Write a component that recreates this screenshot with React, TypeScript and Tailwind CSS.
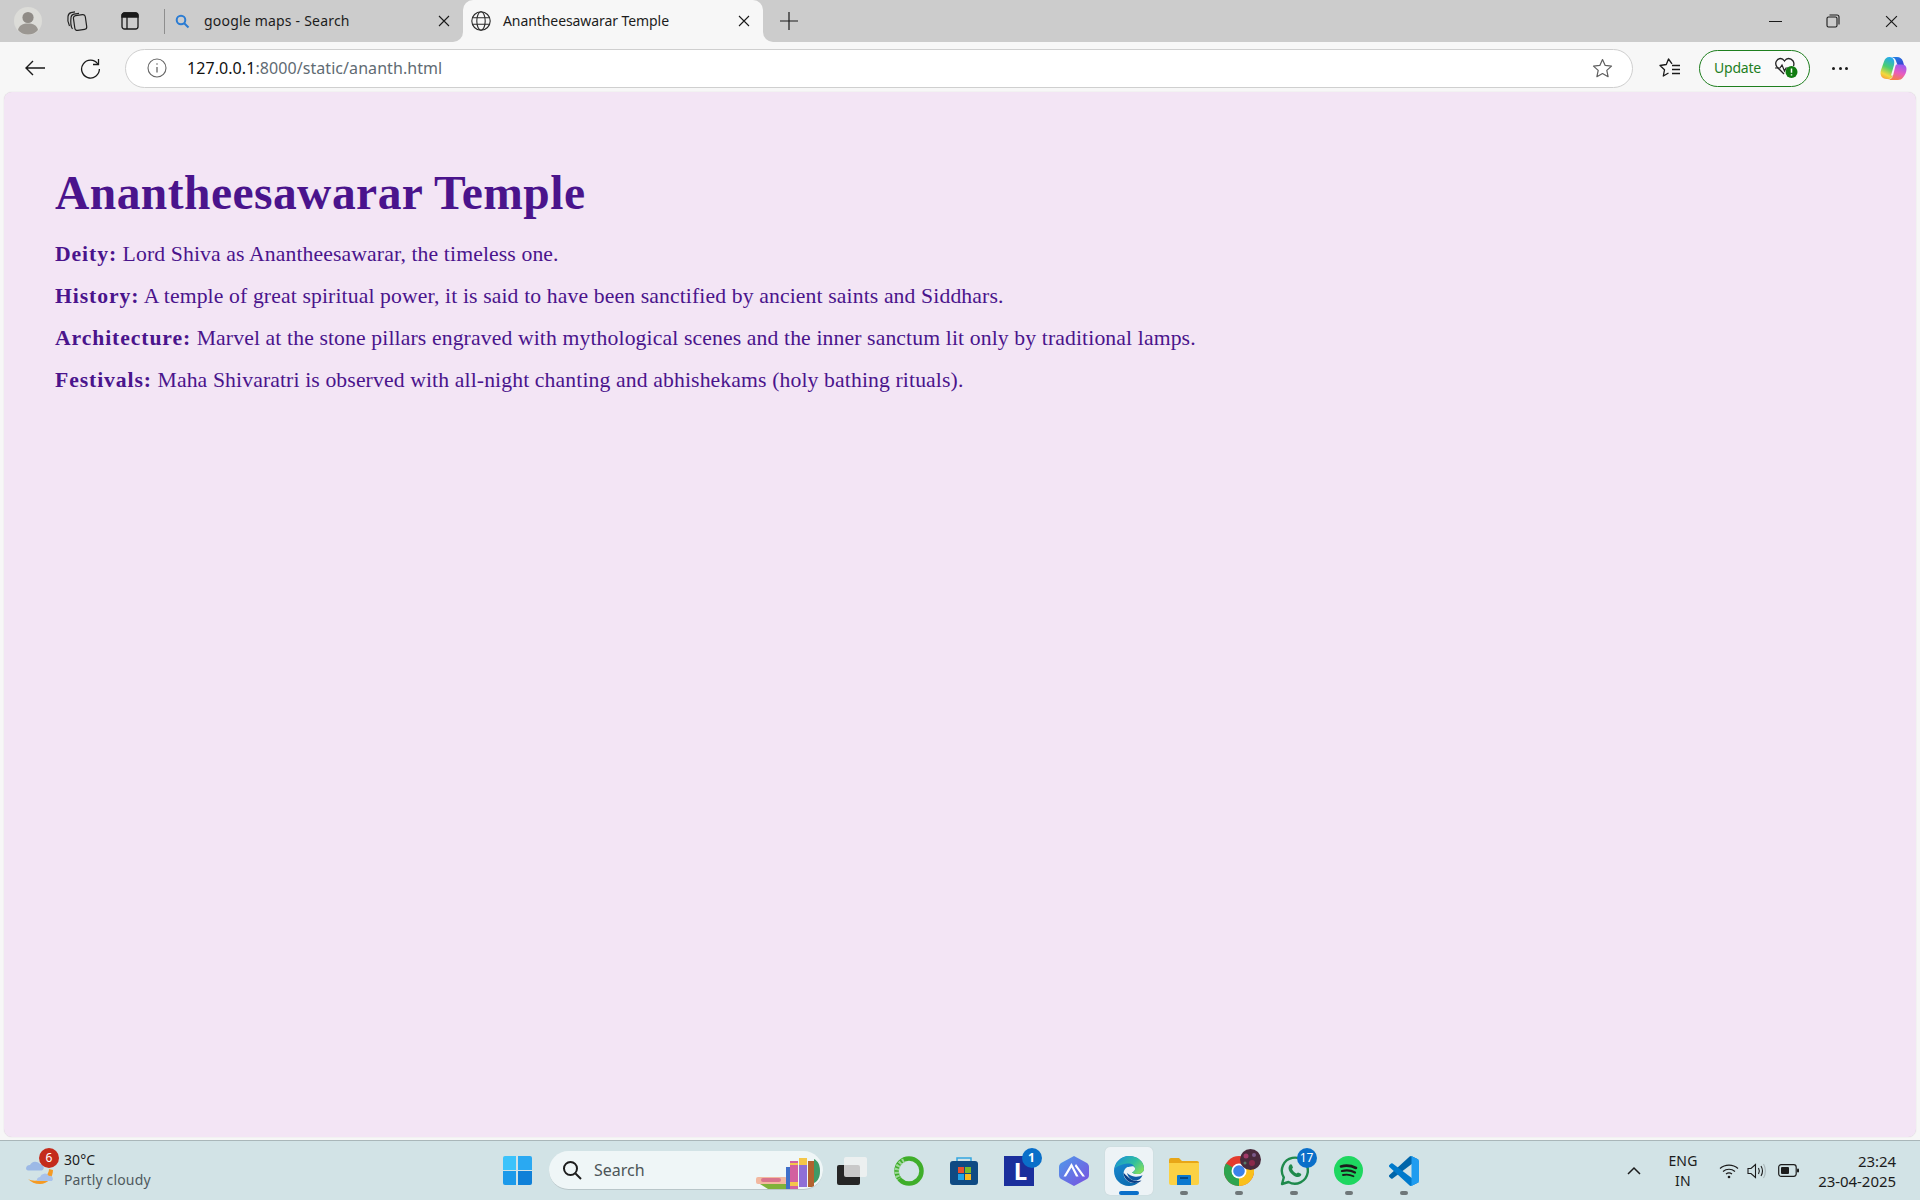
import React from "react";

const ui = { fontFamily: '"Noto Sans", "Open Sans", sans-serif' };
const serif = { fontFamily: '"Liberation Serif", serif' };

function X({ size = 12 }: { size?: number }) {
  return (
    <svg width={size} height={size} viewBox="0 0 12 12" fill="none" stroke="#1a1a1a" strokeWidth="1.1">
      <path d="M1 1l10 10M11 1L1 11" />
    </svg>
  );
}

function Profile() {
  return (
    <svg width="28" height="28" viewBox="0 0 28 28">
      <circle cx="14" cy="14" r="14" fill="#dcdcd8" />
      <circle cx="14" cy="10.5" r="5.6" fill="#8f8b86" />
      <path d="M4 23c1-5 5-6.500 10-6.500S23 18 24 23c-2.500 3-6 4.500-10 4.500S6.500 26 4 23z" fill="#9b9792" />
    </svg>
  );
}

function Collections() {
  return (
    <svg width="22" height="22" viewBox="0 0 22 22" fill="none" stroke="#222" strokeWidth="1.2">
      <rect x="8" y="5" width="12" height="15" rx="2.500" transform="rotate(-8 14 12)" />
      <path d="M6.500 19C5 17 4.500 12 5 7.500c.2-2 1.500-3 3-3.300l5-.9" />
      <path d="M3.500 16C2 13 1.500 9 2 6.500 2.300 4 3.500 3 5 2.600L9 1.800" />
    </svg>
  );
}

function TabsIcon() {
  return (
    <svg width="18" height="18" viewBox="0 0 18 18" fill="none" stroke="#1a1a1a" strokeWidth="1.3">
      <rect x="1" y="1" width="16" height="16" rx="2.500" />
      <path d="M1 3.500a2.500 2.500 0 012.500-2.500h11A2.500 2.500 0 0117 3.500V5H1z" fill="#1a1a1a" />
      <path d="M6 5v12" />
    </svg>
  );
}

function Globe() {
  return (
    <svg width="20" height="20" viewBox="0 0 20 20" fill="none" stroke="#2a2a2a" strokeWidth="1.1">
      <circle cx="10" cy="10" r="9.200" />
      <ellipse cx="10" cy="10" rx="4.200" ry="9.200" />
      <path d="M1.500 6.800h17M1.500 13.200h17" />
    </svg>
  );
}

function Star({ stroke = "#5f5f5f" }: { stroke?: string }) {
  return (
    <svg width="21" height="21" viewBox="0 0 21 21" fill="none" stroke={stroke} strokeWidth="1.2" strokeLinejoin="round">
      <path d="M10.500 1.500l2.700 5.900 6.300.7-4.700 4.300 1.300 6.300-5.600-3.200-5.600 3.200 1.300-6.300L1.500 8.100l6.300-.7z" />
    </svg>
  );
}

function Weather() {
  return (
    <svg width="32" height="32" viewBox="0 0 32 32">
      <path d="M3 24c5 3 14 2 18-3 2-2 3-5 3-7l4 1c0 7-5 14-13 14-5 0-9-2-12-5z" fill="#f59a23" />
      <path d="M1 14a4 4 0 014-4 6 6 0 0110-1 3.500 3.500 0 012 6.500H3a3 3 0 01-2-1.500z" fill="#9cb9e6" />
      <path d="M12 26a3.500 3.500 0 013-4 5 5 0 019-1 3 3 0 013 5H13z" fill="#a9c2ea" />
    </svg>
  );
}

function Badge({ n, bg = "#0a6fc9" }: { n: string; bg?: string }) {
  return (
    <span
      className="absolute top-[-8px] right-[-8px] flex h-[20px] min-w-[20px] items-center justify-center rounded-full px-[2px] text-[12px] text-white"
      style={{ backgroundColor: bg }}
    >
      {n}
    </span>
  );
}

function TaskIcon({ children, dot, w = 55 }: { children: React.ReactNode; dot?: boolean; w?: number }) {
  return (
    <div className="relative flex h-[48px] shrink-0 items-center justify-center" style={{ width: w }}>
      {children}
      {dot && <span className="absolute bottom-[0px] h-[4px] w-[8px] rounded-full bg-[#6f7779]" />}
    </div>
  );
}

function Books() {
  return (
    <svg width="64" height="38" viewBox="0 0 64 38">
      <rect x="0" y="26" width="31" height="7" rx="2" fill="#f2b8a0" />
      <rect x="5" y="27" width="20" height="4" rx="2" fill="#d9748c" />
      <path d="M4 33h27v5H12z" fill="#7fb23a" />
      <rect x="30" y="16" width="4" height="22" fill="#3f6fc9" />
      <rect x="34" y="10" width="8" height="28" fill="#d3609f" />
      <rect x="34" y="12" width="8" height="2" fill="#f4c64a" />
      <rect x="34" y="31" width="8" height="4" fill="#f4c64a" />
      <rect x="43" y="7" width="8" height="29" fill="#8f6fd6" />
      <rect x="43" y="7" width="8" height="7" fill="#f4c64a" />
      <rect x="52" y="10" width="6" height="26" fill="#b2622f" />
      <path d="M58 8c4 2 6 6 6 12s-2 10-6 12z" fill="#3f9a66" />
    </svg>
  );
}

function Copilot() {
  return (
    <svg width="28" height="28" viewBox="0 0 28 28">
      <defs>
        <linearGradient id="cpA" x1="0" y1="0" x2="1" y2="1"><stop offset="0" stopColor="#1b8fe8" /><stop offset="1" stopColor="#3a3fd0" /></linearGradient>
        <linearGradient id="cpB" x1="0.6" y1="0" x2="0.3" y2="1"><stop offset="0" stopColor="#22a8ee" /><stop offset=".45" stopColor="#4ccf6e" /><stop offset=".8" stopColor="#f5d83c" /><stop offset="1" stopColor="#f6a33c" /></linearGradient>
        <linearGradient id="cpC" x1="0.7" y1="0" x2="0.3" y2="1"><stop offset="0" stopColor="#9a5cf0" /><stop offset=".5" stopColor="#e85cc0" /><stop offset="1" stopColor="#f6843c" /></linearGradient>
      </defs>
      <path d="M10 3h8c3 0 5 1.500 6 4.500L25 11h-6.500L17 7c-.6-2-1.800-4-7-4z" fill="url(#cpA)" />
      <path d="M10.500 3C7.500 3 6 4.700 5 7.500L2 16c-1.600 5 1 9 5.500 9h2.300c2.200 0 3.400-1.500 4-3.500L12 21.500l3-10.500C16 7 14.500 3 10.500 3z" fill="url(#cpB)" />
      <path d="M17.500 10.500H23c3 0 4.500 2 4.500 4.500 0 3-1.300 6-3.500 8.500-1.500 1.800-3 2.500-5 2.500H8c3.500 0 5.200-1.700 6-4.500l.2-.5L16 13.500c.4-1.500.8-3 1.500-3z" fill="url(#cpC)" />
    </svg>
  );
}

function Edge() {
  return (
    <svg className="relative" width="30" height="30" viewBox="0 0 30 30">
      <defs>
        <linearGradient id="edgeA" x1="0" y1="0.2" x2="1" y2="0.8"><stop offset="0" stopColor="#1a93d4" /><stop offset=".55" stopColor="#2fbf9f" /><stop offset="1" stopColor="#86e05a" /></linearGradient>
        <linearGradient id="edgeB" x1="0" y1="0" x2="0.5" y2="1"><stop offset="0" stopColor="#1c8fd6" /><stop offset="1" stopColor="#0c6cb0" /></linearGradient>
      </defs>
      <path d="M15 0C6.700 0 0 6.700 0 15s6.700 15 15 15c4 0 7.500-1.500 10-4-6 2.500-12 .5-14.500-4.500C8.500 17 10 12.500 14 10.800 12.500 12 20 8 21 12c.5 2 -1 3.500-3 4.500 5 3 12 1.500 12-4C30 5.500 23.500 0 15 0z" fill="url(#edgeB)" />
      <path d="M15 0c8.500 0 15 5.500 15 12.500 0 5.500-7 7-12 4 2-1 3.500-2.500 3-4.500-1-4-5-5-8-4.500C7.500 8.500 3 10 .8 12.500 2 5.500 8 0 15 0z" fill="url(#edgeA)" />
      <path d="M9.500 17c.5 6 5.500 10 11 10 3 0 5-.7 7-2.500-4 1-9.500.5-13-3-2.200-2-3.500-3.500-5-4.500z" fill="#0b3f86" />
      <path d="M13 17c2 2 4.500 3 7 3.500 3.500.5 6.500 0 8.500-1.500-1 3-3.500 5.500-7 5.500-4 0-7.500-3-8.500-7.500z" fill="#0d5aa6" />
    </svg>
  );
}

function VSCode() {
  return (
    <svg width="30" height="30" viewBox="0 0 100 100">
      <path fill="#0065A9" d="M96.460 10.800 75.860.870c-2.380-1.150-5.230-.660-7.100 1.200L1.320 63.580a4.170 4.170 0 00.005 6.160l5.510 5.010a4.170 4.170 0 005.320.240L93.400 13.470c2.720-2.060 6.620-.120 6.620 3.300v-.240c0-2.400-1.380-4.580-3.540-5.630z" />
      <path fill="#007ACC" d="M96.460 89.200 75.860 99.130c-2.380 1.150-5.230.660-7.100-1.200L1.320 36.420a4.170 4.170 0 01.005-6.160l5.510-5.010a4.170 4.170 0 015.320-.240L93.400 86.530c2.720 2.060 6.620.120 6.620-3.300v.240c0 2.400-1.380 4.580-3.540 5.630z" />
      <path fill="#1F9CF0" d="M75.860 99.130c-2.380 1.150-5.230.660-7.100-1.200 2.310 2.310 6.250.670 6.250-2.580V4.650c0-3.250-3.940-4.890-6.250-2.580 1.870-1.870 4.720-2.360 7.100-1.200l20.600 9.900c2.160 1.040 3.540 3.230 3.540 5.630v66.700c0 2.400-1.380 4.590-3.540 5.630z" />
    </svg>
  );
}

export default function App() {
  const para = "m-0 mb-[18.700px] h-[23.300px] text-[21.700px] leading-[23.300px] tracking-[0.120px]";
  const label = "tracking-[0.900px]";
  return (
    <div className="flex h-[1200px] w-[1920px] flex-col overflow-hidden bg-[#f7f7f7]" style={ui}>
      {/* tab strip */}
      <header className="flex h-[42px] shrink-0 items-center bg-[#cccccc] text-[14px] text-[#1c1c1c]">
        <div className="flex w-[54px] items-center justify-center pl-[1px]"><Profile /></div>
        <div className="flex w-[45px] items-center justify-center"><Collections /></div>
        <div className="flex w-[65px] items-center justify-center pr-[3px]"><TabsIcon /></div>
        <div className="h-[25px] w-px bg-[#8e8e8e]" />
        <div className="flex w-[298px] items-center pl-[10px]">
          <svg width="15" height="15" viewBox="0 0 15 15" fill="none" stroke="#2b7cd3" strokeWidth="2">
            <circle cx="6" cy="6" r="4.300" />
            <path d="M9.200 9.200l4.300 4.300" />
          </svg>
          <span className="ml-[14px] w-[234px] pb-[1px] text-[14px] tracking-[0.200px]">google maps - Search</span>
          <X />
        </div>
        <div className="relative flex h-[42px] w-[300px] items-center rounded-t-[10px] bg-[#f7f7f7] pl-[8px]">
          <span className="absolute bottom-0 left-[-10px] h-[10px] w-[10px] bg-[#f7f7f7]"><span className="block h-full w-full rounded-br-[10px] bg-[#cccccc]" /></span>
          <span className="absolute bottom-0 right-[-10px] h-[10px] w-[10px] bg-[#f7f7f7]"><span className="block h-full w-full rounded-bl-[10px] bg-[#cccccc]" /></span>
          <Globe />
          <span className="ml-[12px] w-[235px] pb-[1px] text-[14px] tracking-[-0.080px]">Anantheesawarar Temple</span>
          <X />
        </div>
        <div className="flex w-[52px] items-center justify-center">
          <svg width="18" height="18" viewBox="0 0 18 18" stroke="#1a1a1a" strokeWidth="1.2"><path d="M9 0v18M0 9h18" /></svg>
        </div>
        <div className="flex-1" />
        <div className="flex items-center">
          <div className="flex w-[58px] justify-center"><span className="h-px w-[13px] bg-[#1a1a1a]" /></div>
          <div className="flex w-[58px] justify-center">
            <svg width="14" height="14" viewBox="0 0 14 14" fill="none" stroke="#1a1a1a" strokeWidth="1.1">
              <rect x="1" y="3" width="10" height="10" rx="1.500" />
              <path d="M3.500 1H11a2 2 0 012 2v7.500" />
            </svg>
          </div>
          <div className="flex w-[58px] justify-center"><X size={13} /></div>
        </div>
      </header>

      {/* toolbar */}
      <nav className="flex h-[50px] shrink-0 items-center bg-[#f7f7f7] pt-[2px]">
        <div className="flex w-[70px] justify-center">
          <svg width="20" height="16" viewBox="0 0 20 16" fill="none" stroke="#1a1a1a" strokeWidth="1.4">
            <path d="M20 8H1M8 1L1 8l7 7" />
          </svg>
        </div>
        <div className="flex w-[40px] justify-center">
          <svg width="21" height="21" viewBox="0 0 21 21" fill="none" stroke="#1a1a1a" strokeWidth="1.3">
            <path d="M17.800 6A8.900 8.900 0 1019.400 11" />
            <path d="M18.500 1v5.500H13" />
          </svg>
        </div>
        <div className="ml-[15px] flex h-[39px] w-[1508px] items-center rounded-full border border-[#cfcfcf] bg-white">
          <svg className="ml-[21px]" width="20" height="20" viewBox="0 0 20 20" fill="none" stroke="#666" strokeWidth="1.100">
            <circle cx="10" cy="10" r="9" />
            <path d="M10 9v5.500" strokeWidth="1.300" />
            <circle cx="10" cy="6" r=".8" fill="#666" stroke="none" />
          </svg>
          <span className="ml-[20px] whitespace-nowrap text-[16px] tracking-[0.070px] text-[#5f6b73]">
            <span className="text-[#111111]">127.0.0.1</span>:8000/static/ananth.html
          </span>
          <div className="flex-1" />
          <div className="mr-[19px]"><Star /></div>
        </div>
        <div className="ml-[26px] flex w-[22px] justify-center">
          <svg width="22" height="20" viewBox="0 0 22 20" fill="none" stroke="#1a1a1a" strokeWidth="1.300" strokeLinejoin="round">
            <path d="M13 5.800L9.500 1 7.300 6.500 1 7.500l4.500 4.300L4.300 18l5.200-3" />
            <path d="M13 7.500h8M13 11.500h8M13 15.500h8" />
          </svg>
        </div>
        <div className="ml-[18px] flex h-[37px] w-[111px] items-center rounded-full border-[1.500px] border-[#1f7f1f] bg-[#fafafa] pl-[14px] text-[14px] text-[#1f7f1f]">
          <span className="pb-[2px] tracking-[-0.200px]">Update</span>
          <svg className="ml-[13px]" width="25" height="24" viewBox="0 0 25 24" fill="none">
            <path d="M10 18L3 11C0 7 3 2.500 6.500 2.500c2 0 3 1 4 2.500 1-1.500 2-2.500 4-2.500C18 2.500 21 6 19.500 10" stroke="#222" strokeWidth="1.300" />
            <path d="M1 12h5l2-3 2.500 6 1.500-3h2" stroke="#222" strokeWidth="1.200" />
            <circle cx="17.500" cy="16" r="6" fill="#107c10" />
            <path d="M17.500 12.500v4.300M17.500 18.300v1.200" stroke="#fff" strokeWidth="1.500" />
          </svg>
        </div>
        <div className="flex w-[60px] justify-center gap-[3.500px]">
          <span className="h-[3px] w-[3px] rounded-full bg-[#1a1a1a]" />
          <span className="h-[3px] w-[3px] rounded-full bg-[#1a1a1a]" />
          <span className="h-[3px] w-[3px] rounded-full bg-[#1a1a1a]" />
        </div>
        <div className="ml-[9px]"><Copilot /></div>
      </nav>

      {/* page */}
      <main className="mx-[4px] h-[1045px] shrink-0 rounded-[8px] bg-[#f3e5f5] pl-[51px] pt-[81px] text-[#4a148c] shadow-[0_0_1px_#c9c9c9]" style={serif}>
        <h1 className="m-0 mb-[30px] h-[40px] text-[47.500px] font-bold leading-[40px] tracking-[0.460px]">Anantheesawarar Temple</h1>
        <p className={para}><strong className={label}>Deity:</strong> Lord Shiva as Anantheesawarar, the timeless one.</p>
        <p className={para}><strong className={label}>History:</strong> A temple of great spiritual power, it is said to have been sanctified by ancient saints and Siddhars.</p>
        <p className={para}><strong className={label}>Architecture:</strong> Marvel at the stone pillars engraved with mythological scenes and the inner sanctum lit only by traditional lamps.</p>
        <p className={para}><strong className={label}>Festivals:</strong> Maha Shivaratri is observed with all-night chanting and abhishekams (holy bathing rituals).</p>
      </main>

      {/* taskbar */}
      <footer className="mt-[3px] flex h-[60px] shrink-0 items-center border-t border-[#a9b6b9] bg-[#d2e3e6] text-[#1c1c1c]">
        <div className="flex w-[495px] items-center pl-[25px]">
          <div className="relative h-[32px] w-[32px]">
            <Weather />
            <span className="absolute left-[14px] top-[-7px] flex h-[20px] w-[20px] items-center justify-center rounded-full bg-[#c42b1c] text-[12px] text-white">6</span>
          </div>
          <div className="ml-[7px] pb-[2px] text-[14px] leading-[20px]">
            <div className="tracking-[0.100px]">30°C</div>
            <div className="text-[#4f5a5e] tracking-[0.150px]">Partly cloudy</div>
          </div>
        </div>
        <TaskIcon w={44}>
          <div className="grid h-[29px] w-[29px] grid-cols-2 gap-[1.500px]">
            <span className="rounded-tl-[2px] bg-[#3cc3fb]" />
            <span className="rounded-tr-[2px] bg-[#2aa9f2]" />
            <span className="rounded-bl-[2px] bg-[#1c9aea]" />
            <span className="rounded-br-[2px] bg-[#0f80d8]" />
          </div>
        </TaskIcon>
        <div className="ml-[10px] flex h-[39px] w-[274px] items-center overflow-hidden rounded-full border-b border-[#b9c6c9] bg-[#eff6f7] pl-[13px]">
          <svg width="20" height="20" viewBox="0 0 20 20" fill="none" stroke="#1c1c1c" strokeWidth="2">
            <circle cx="8.500" cy="8.500" r="6.500" />
            <path d="M13.500 13.500l5.500 5.500" />
          </svg>
          <span className="ml-[12px] text-[16px] text-[#4d5558]">Search</span>
          <div className="ml-auto mr-[3px] self-end"><Books /></div>
        </div>
        <TaskIcon w={58}>
          <div className="relative h-[28px] w-[30px]">
            <span className="absolute bottom-0 left-0 h-[20px] w-[23px] rounded-[2px] bg-[#262626]" />
            <span className="absolute right-0 top-0 h-[20px] w-[23px] rounded-[2px] bg-[#f2f2f2] opacity-80" />
          </div>
        </TaskIcon>
        <TaskIcon>
          <svg width="30" height="30" viewBox="0 0 30 30" fill="none">
            <circle cx="15" cy="15" r="12.500" stroke="#3fae2a" strokeWidth="4.500" />
            <path d="M10 4.500A12.500 12.500 0 005 23" stroke="#9ed79a" strokeWidth="4.500" strokeDasharray="2 1.500" />
          </svg>
        </TaskIcon>
        <TaskIcon>
          <svg width="30" height="30" viewBox="0 0 30 30">
            <path d="M8 6V2h14v4" fill="none" stroke="#35a7e0" strokeWidth="1.500" />
            <rect x="1" y="5" width="28" height="24" rx="3" fill="#0f4a83" />
            <rect x="9" y="11" width="6" height="6" fill="#e8502d" />
            <rect x="16" y="11" width="6" height="6" fill="#7ab929" />
            <rect x="9" y="18" width="6" height="6" fill="#21a3e8" />
            <rect x="16" y="18" width="6" height="6" fill="#fbb81c" />
          </svg>
        </TaskIcon>
        <TaskIcon>
          <div className="relative flex h-[30px] w-[30px] items-center justify-center bg-[#1b2f9c] pl-[4px] text-[24px] font-bold leading-none text-white">
            L
            <Badge n="1" />
          </div>
        </TaskIcon>
        <TaskIcon>
          <svg width="30" height="32" viewBox="0 0 30 32">
            <defs>
              <linearGradient id="hx" x1="0" y1="0" x2="1" y2="1"><stop offset="0" stopColor="#4f9bea" /><stop offset="1" stopColor="#7a4fe0" /></linearGradient>
            </defs>
            <path d="M15 1l12 6.500c2 1 3 2.500 3 4.500v8c0 2-1 3.500-3 4.500L15 31 3 24.500C1 23.500 0 22 0 20v-8c0-2 1-3.500 3-4.500z" fill="url(#hx)" />
            <path d="M4.500 21.500L12.500 8l7 13.500h-2.500L12.500 12.500l-5.500 9zM17 9l9 12.500h-2.500L15.800 11z" fill="#fff" />
          </svg>
        </TaskIcon>
        <TaskIcon>
          <span className="absolute inset-y-0 left-[3.500px] w-[48px] rounded-[5px] bg-[#edf3f6] shadow-[0_0_1px_#b5c0c4]" />
          <Edge />
          <span className="absolute bottom-[0px] h-[4px] w-[20px] rounded-full bg-[#0a6fc9]" />
        </TaskIcon>
        <TaskIcon dot>
          <svg width="30" height="28" viewBox="0 0 30 28">
            <path d="M0 3a2 2 0 012-2h8l3 3h15a2 2 0 012 2v3H0z" fill="#e8a617" />
            <path d="M0 6h30v20a2 2 0 01-2 2H2a2 2 0 01-2-2z" fill="#fbd144" />
            <path d="M8 19a1 1 0 011-1h12a1 1 0 011 1v9H8z" fill="#0a78cf" />
            <path d="M11 21h8" stroke="#07386a" strokeWidth="1.500" />
          </svg>
        </TaskIcon>
        <TaskIcon dot>
          <div className="relative h-[30px] w-[30px]">
            <svg width="30" height="30" viewBox="0 0 30 30">
              <circle cx="15" cy="15" r="15" fill="#e33b2e" />
              <path d="M15 15L28 7.500A15 15 0 0115 30z" fill="#f9c01c" />
              <path d="M15 15L15 30A15 15 0 012 7.500z" fill="#2ea44f" />
              <circle cx="15" cy="15" r="7.500" fill="#fff" />
              <circle cx="15" cy="15" r="5.800" fill="#3b82ea" />
            </svg>
            <svg className="absolute right-[-7px] top-[-7px]" width="21" height="21" viewBox="0 0 21 21">
              <circle cx="10.500" cy="10.500" r="10.500" fill="#4a2a3c" />
              <circle cx="6" cy="7" r="2.500" fill="#a23a6a" />
              <circle cx="14" cy="6" r="2" fill="#7a5a8a" />
              <circle cx="12" cy="14" r="3" fill="#8a2a4a" />
              <circle cx="5" cy="14" r="1.500" fill="#5a7a6a" />
            </svg>
          </div>
        </TaskIcon>
        <TaskIcon dot>
          <div className="relative h-[30px] w-[30px]">
            <svg width="30" height="30" viewBox="0 0 30 30" fill="none">
              <path d="M3 28l1.800-6.500A13 13 0 1 1 9.500 26z" stroke="#1f8a4c" strokeWidth="2.400" strokeLinejoin="round" />
              <path d="M10.500 9c1-1 2-1 2.500 0l1 2.500-1 1.500c1 2 2.500 3.500 4.500 4.500l1.500-1 2.500 1c1 .5 1 1.500 0 2.500-1.500 1.500-4 1.500-7-.5s-5-5-5-7.500c0-1 .5-2 1-3z" fill="#1f8a4c" />
            </svg>
            <Badge n="17" />
          </div>
        </TaskIcon>
        <TaskIcon dot>
          <svg width="29" height="29" viewBox="0 0 29 29" fill="none" stroke="#1c1c1c" strokeLinecap="round">
            <circle cx="14.500" cy="14.500" r="14.500" fill="#1ed760" stroke="none" />
            <path d="M7 10.500c5-1.500 10-1 15 1.500" strokeWidth="2.600" />
            <path d="M8 15c4-1 9-.8 13 1.500" strokeWidth="2.200" />
            <path d="M9 19c3.500-.8 7-.5 10.500 1.200" strokeWidth="1.800" />
          </svg>
        </TaskIcon>
        <TaskIcon dot><VSCode /></TaskIcon>
        <div className="flex-1" />
        <div className="flex items-center">
          <svg width="14" height="9" viewBox="0 0 14 9" fill="none" stroke="#1c1c1c" strokeWidth="1.500"><path d="M1 8l6-6 6 6" /></svg>
          <div className="ml-[20px] w-[44px] text-center text-[14px] leading-[20px] tracking-[0.200px]">ENG<br />IN</div>
          <svg className="ml-[14px]" width="20" height="16" viewBox="0 0 20 16" fill="none" stroke="#1c1c1c" strokeWidth="1.200">
            <path d="M1 5.500C6 1 14 1 19 5.500M4 8.500c3.500-3 8.500-3 12 0M7 11c2-1.500 4-1.500 6 0" />
            <circle cx="10" cy="14" r="1.300" fill="#1c1c1c" stroke="none" />
          </svg>
          <svg className="ml-[8px]" width="20" height="16" viewBox="0 0 20 16" fill="none" stroke="#1c1c1c" strokeWidth="1.100">
            <path d="M1 5.500h3L8.500 1.500v13L4 10.500H1z" />
            <path d="M11.500 5c1 1.800 1 4.200 0 6M14 3c1.800 3 1.800 7 0 10" />
            <path d="M16.500 1c2.500 4 2.500 10 0 14" stroke="#a9b6b9" />
          </svg>
          <svg className="ml-[11px]" width="21" height="13" viewBox="0 0 21 13" fill="none">
            <rect x=".7" y=".7" width="17.500" height="11.600" rx="2.500" stroke="#1c1c1c" strokeWidth="1.200" />
            <rect x="3" y="3" width="8" height="7" rx="1" fill="#1c1c1c" />
            <rect x="19" y="4.500" width="2" height="4" rx="1" fill="#1c1c1c" />
          </svg>
          <div className="ml-[19px] mr-[24px] w-[78px] whitespace-nowrap text-right text-[15px] leading-[20px] tracking-[-0.050px]">23:24<br />23-04-2025</div>
        </div>
      </footer>
    </div>
  );
}
